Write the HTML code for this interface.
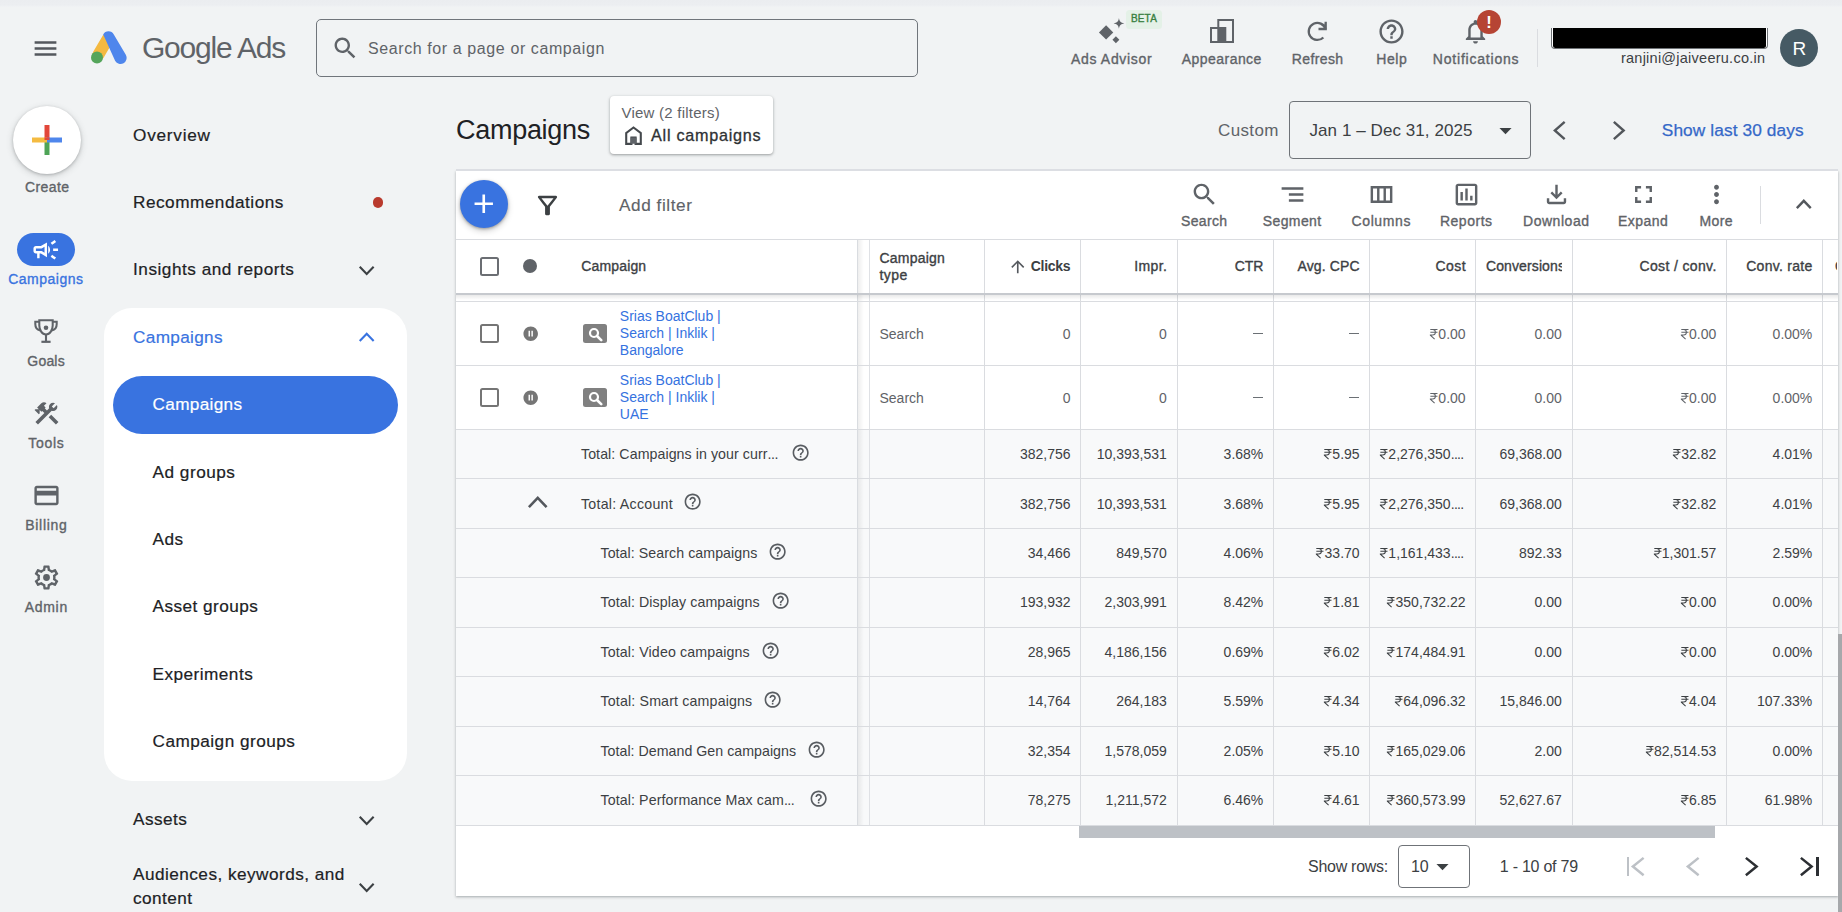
<!DOCTYPE html>
<html><head><meta charset="utf-8"><title>Campaigns - Google Ads</title><style>

html,body{margin:0;padding:0}
body{width:1842px;height:912px;overflow:hidden;background:#f1f3f4;position:relative;font-family:"Liberation Sans",sans-serif;}
.a{position:absolute}
.t{white-space:nowrap}
svg.rs{display:inline-block;height:0.716em;width:0.56em;margin-right:0.02em;vertical-align:baseline;overflow:visible}

</style></head><body>
<div class="a" style="left:0px;top:0px;width:1842px;height:6.5px;background:linear-gradient(#ebedf0,#eceef1 70%,#f1f3f4)"></div>
<svg class="a" style="left:31.20px;top:33.70px" width="29" height="29" viewBox="0 0 24 24"><path fill="#54585d" d="M3 18h18v-2H3v2zm0-5h18v-2H3v2zm0-7v2h18V6H3z"/></svg>
<svg class="a" style="left:90px;top:30px" width="38" height="35" viewBox="0 0 38 35"><path d="M13.4 4.4 L3.2 21.8 a6 6 0 0 0 10.4 6 L23.6 10.4z" fill="#f4b940"/><path d="M13.2 4.4 a6.1 6.1 0 0 1 10.6 0 L35.8 24.8 a6.1 6.1 0 0 1 -10.6 6.100z" fill="#4f86ec"/><circle cx="7" cy="27.600" r="6" fill="#55a55b"/></svg>
<div class="a t " style="top:30.000px;font-size:30px;line-height:36px;color:#5f6368;letter-spacing:-1.212px;left:142.00px;">Google Ads</div>
<div class="a" style="left:316px;top:19.2px;width:599.5px;height:55.5px;border:1px solid #70757b;border-radius:5px"></div>
<svg class="a" style="left:331.45px;top:33.95px" width="28.5" height="28.5" viewBox="0 0 24 24"><path fill="#5f6368" d="M15.5 14h-.79l-.28-.27C15.41 12.59 16 11.11 16 9.5 16 5.91 13.09 3 9.5 3S3 5.91 3 9.5 5.91 16 9.5 16c1.61 0 3.09-.59 4.23-1.57l.27.28v.79l5 4.99L20.49 19l-4.99-5zm-6 0C7.01 14 5 11.99 5 9.5S7.01 5 9.5 5 14 7.01 14 9.5 11.99 14 9.5 14z"/></svg>
<div class="a t " style="top:39.000px;font-size:16px;line-height:19px;color:#5f6368;letter-spacing:0.597px;left:368.00px;">Search for a page or campaign</div>
<svg class="a" style="left:1098px;top:18px" width="28" height="27" viewBox="0 0 28 27"><path fill="#5f6368" d="M8.100 7.300 L15.250 14.450 L8.100 21.600 L0.950 14.450z"/><path fill="#5f6368" d="M20.950 0.100 C21.500 3.600 22.700 4.850 26.250 5.400 C22.700 5.950 21.500 7.200 20.950 10.700 C20.400 7.200 19.200 5.950 15.650 5.400 C19.200 4.850 20.400 3.600 20.950 0.100z"/><path fill="#5f6368" d="M17.900 18.250 L21.350 21.700 L17.900 25.150 L14.450 21.700z"/></svg>
<div class="a" style="left:1126px;top:9.8px;width:36px;height:18.8px;background:#e4f1e7;border-radius:3.500px"></div>
<div class="a t " style="top:13.000px;font-size:10px;line-height:12px;color:#37803f;letter-spacing:0.156px;-webkit-text-stroke:0.35px #37803f;left:643.98px;width:1000px;text-align:center;">BETA</div>
<div class="a t " style="top:51.000px;font-size:14px;line-height:17px;color:#5f6368;letter-spacing:0.688px;-webkit-text-stroke:0.35px #5f6368;left:611.64px;width:1000px;text-align:center;">Ads Advisor</div>
<svg class="a" style="left:1209.500px;top:19px" width="24" height="24" viewBox="0 0 24 24"><path fill="#5f6368" fill-rule="evenodd" d="M7.300 0H24V24H0V8H7.300ZM9.300 2V8H16.300V22H22V2ZM2 10V22H7.300V10Z"/></svg>
<div class="a t " style="top:51.000px;font-size:14px;line-height:17px;color:#5f6368;letter-spacing:0.449px;-webkit-text-stroke:0.35px #5f6368;left:721.82px;width:1000px;text-align:center;">Appearance</div>
<svg class="a" style="left:1305px;top:19px" width="25" height="25" viewBox="0 0 25 25"><path d="M20.520 10.040 A8.550 8.550 0 1 0 18.350 18.450" fill="none" stroke="#5f6368" stroke-width="2.300"/><path d="M20.700 2.700 V10 H13.500" fill="none" stroke="#5f6368" stroke-width="2.300"/><path d="M20.700 10 L17.600 5.600 L19.400 4.400z" fill="#5f6368"/></svg>
<div class="a t " style="top:51.000px;font-size:14px;line-height:17px;color:#5f6368;letter-spacing:0.397px;-webkit-text-stroke:0.35px #5f6368;left:817.60px;width:1000px;text-align:center;">Refresh</div>
<svg class="a" style="left:1377.10px;top:16.90px" width="29" height="29" viewBox="0 0 24 24"><path fill="#5f6368" d="M11 18h2v-2h-2v2zm1-16C6.48 2 2 6.48 2 12s4.48 10 10 10 10-4.48 10-10S17.52 2 12 2zm0 18c-4.41 0-8-3.59-8-8s3.59-8 8-8 8 3.59 8 8-3.59 8-8 8zm0-14c-2.21 0-4 1.79-4 4h2c0-1.1.9-2 2-2s2 .9 2 2c0 2-3 1.75-3 5h2c0-2.25 3-2.5 3-5 0-2.21-1.79-4-4-4z"/></svg>
<div class="a t " style="top:51.000px;font-size:14px;line-height:17px;color:#5f6368;letter-spacing:0.551px;-webkit-text-stroke:0.35px #5f6368;left:891.78px;width:1000px;text-align:center;">Help</div>
<svg class="a" style="left:1461.30px;top:17.10px" width="29" height="29" viewBox="0 0 24 24"><path fill="#5f6368" d="M12 22c1.1 0 2-.9 2-2h-4c0 1.1.9 2 2 2zm6-6v-5c0-3.07-1.63-5.64-4.5-6.32V4c0-.83-.67-1.5-1.5-1.5s-1.5.67-1.5 1.5v.68C7.64 5.36 6 7.92 6 11v5l-2 2v1h16v-1l-2-2zm-2 1H8v-6c0-2.48 1.51-4.5 4-4.5s4 2.02 4 4.5v6z"/></svg>
<div class="a" style="left:1477px;top:9.7px;width:24px;height:24px;background:#b64434;border-radius:50%"></div>
<div class="a t " style="top:12.000px;font-size:16.5px;line-height:20px;color:#fff;font-weight:700;left:989.00px;width:1000px;text-align:center;">!</div>
<div class="a t " style="top:51.000px;font-size:14px;line-height:17px;color:#5f6368;letter-spacing:0.788px;-webkit-text-stroke:0.35px #5f6368;left:976.09px;width:1000px;text-align:center;">Notifications</div>
<div class="a" style="left:1536.5px;top:29px;width:1px;height:38px;background:#dadce0"></div>
<div class="a" style="left:1551px;top:27.800px;width:216.700px;height:21.700px;background:#fff;border:1px solid #6e7276;border-top:none;border-radius:0 0 4px 4px;box-sizing:border-box"><div class="a" style="left:0.800px;right:0.800px;top:0;bottom:0.800px;background:#000;border-radius:0 0 2.500px 2.500px"></div></div>
<div class="a t " style="top:50.000px;font-size:14.5px;line-height:17px;color:#3c4043;letter-spacing:0.248px;right:76.75px;">ranjini@jaiveeru.co.in</div>
<div class="a" style="left:1779.8px;top:28.8px;width:38.6px;height:38.6px;background:#465a64;border-radius:50%"></div>
<div class="a t " style="top:37.000px;font-size:19px;line-height:23px;color:#fff;left:1299.30px;width:1000px;text-align:center;">R</div>
<div class="a" style="left:13.2px;top:105.5px;width:68px;height:68px;background:#fff;border-radius:50%;box-shadow:0 1px 3px rgba(60,64,67,.3),0 2px 6px 1px rgba(60,64,67,.15)"></div>
<svg class="a" style="left:32.200px;top:124.500px" width="30" height="30" viewBox="0 0 30 30"><path fill="#e2473a" d="M12.500 0h5v15h-5z"/><path fill="#4ea457" d="M12.500 15h5v15h-5z"/><path fill="#f4bb41" d="M0 12.500h15v5H0z"/><path fill="#4f86ec" d="M15 12.500h15v5H15z"/><path fill="#e2473a" d="M12.500 12.500h5v2.500h-5z"/></svg>
<div class="a t " style="top:179.000px;font-size:14px;line-height:17px;color:#5f6368;letter-spacing:0.413px;-webkit-text-stroke:0.35px #5f6368;left:-452.79px;width:1000px;text-align:center;">Create</div>
<div class="a" style="left:17px;top:232.5px;width:58px;height:33.5px;background:#3973e0;border-radius:17px"></div>
<svg class="a" style="left:31.25px;top:234.55px" width="29.5" height="29.5" viewBox="0 0 24 24"><path fill="#fff" d="M18 11v2h4v-2h-4zm-2 6.61c.96.71 2.21 1.65 3.2 2.39.4-.53.8-1.07 1.2-1.6-.99-.74-2.24-1.68-3.2-2.4-.4.54-.8 1.08-1.2 1.61zM20.4 5.6c-.4-.53-.8-1.07-1.2-1.6-.99.74-2.24 1.68-3.2 2.4.4.53.8 1.07 1.2 1.6.96-.72 2.21-1.65 3.2-2.4zM4 9c-1.1 0-2 .9-2 2v2c0 1.1.9 2 2 2h1v4h2v-4h1l5 3V6L8 9H4zm5.03 1.71L11 9.53v4.94l-1.97-1.18-.48-.29H4v-2h4.55l.48-.29zM15.5 12c0-1.33-.58-2.53-1.5-3.35v6.69c.92-.81 1.5-2.01 1.5-3.34z"/></svg>
<div class="a t " style="top:271.000px;font-size:14px;line-height:17px;color:#3973e0;letter-spacing:0.520px;-webkit-text-stroke:0.35px #3973e0;left:-454.14px;width:1000px;text-align:center;">Campaigns</div>
<svg class="a" style="left:34px;top:319px" width="24" height="25" viewBox="0 0 24 25"><g fill="none" stroke="#5f6368" stroke-width="2.050"><path d="M5.300 1.300H18.700V6.500C18.700 11 16 15.400 12 15.400C8 15.400 5.300 11 5.300 6.500Z"/><path d="M5.300 2.700H1.300V5C1.300 8.500 3.400 10.900 6.200 11.400M18.700 2.700H22.700V5C22.700 8.500 20.600 10.900 17.800 11.400"/><path d="M12 15.300V22.500" stroke-width="2.100"/><path d="M7.400 22.800H16.600" stroke-width="2.200"/></g><circle cx="12" cy="8.800" r="2.300" fill="#5f6368"/></svg>
<div class="a t " style="top:353.000px;font-size:14px;line-height:17px;color:#5f6368;letter-spacing:0.205px;-webkit-text-stroke:0.35px #5f6368;left:-453.90px;width:1000px;text-align:center;">Goals</div>
<svg class="a" style="left:31.50px;top:399.00px" width="29" height="29" viewBox="0 0 24 24"><path fill="#5f6368" d="M13.783 15.172l2.121-2.121 5.996 5.996-2.121 2.121zM17.5 10c1.93 0 3.5-1.57 3.5-3.5 0-.58-.16-1.12-.41-1.6l-2.7 2.7-1.49-1.49 2.7-2.7c-.48-.25-1.020-.41-1.6-.41C15.57 3 14 4.57 14 6.5c0 .41.08.8.21 1.16l-1.85 1.85-1.78-1.78.71-.71-1.41-1.41L12 3.49c-1.17-1.17-3.07-1.17-4.240 0L4.220 7.030l1.410 1.410H2.810l-.71.71 3.540 3.540.71-.71V9.150l1.410 1.410.71-.71 1.780 1.780-7.410 7.410 2.120 2.120L16.340 9.790c.36.13.75.21 1.160.21z"/></svg>
<div class="a t " style="top:435.000px;font-size:14px;line-height:17px;color:#5f6368;letter-spacing:0.663px;-webkit-text-stroke:0.35px #5f6368;left:-453.67px;width:1000px;text-align:center;">Tools</div>
<svg class="a" style="left:31.50px;top:480.50px" width="29" height="29" viewBox="0 0 24 24"><path fill="#5f6368" d="M20 4H4c-1.11 0-1.99.89-1.99 2L2 18c0 1.11.89 2 2 2h16c1.11 0 2-.89 2-2V6c0-1.11-.89-2-2-2zm0 14H4v-6h16v6zm0-10H4V6h16v2z"/></svg>
<div class="a t " style="top:517.000px;font-size:14px;line-height:17px;color:#5f6368;letter-spacing:0.664px;-webkit-text-stroke:0.35px #5f6368;left:-453.67px;width:1000px;text-align:center;">Billing</div>
<svg class="a" style="left:31.50px;top:562.50px" width="29" height="29" viewBox="0 0 24 24"><path fill="#5f6368" d="M19.43 12.98c.04-.32.07-.64.07-.98 0-.34-.03-.66-.07-.98l2.11-1.65c.19-.15.24-.42.12-.64l-2-3.46c-.09-.16-.26-.25-.44-.25-.06 0-.12.01-.17.03l-2.49 1c-.52-.4-1.08-.73-1.69-.98l-.38-2.65C14.46 2.18 14.25 2 14 2h-4c-.25 0-.46.18-.49.42l-.38 2.65c-.61.25-1.17.59-1.69.98l-2.49-1c-.06-.02-.12-.03-.18-.03-.17 0-.34.09-.43.25l-2 3.46c-.13.22-.07.49.12.64l2.11 1.65c-.04.32-.07.65-.07.98 0 .33.03.66.07.98l-2.11 1.65c-.19.15-.24.42-.12.64l2 3.46c.09.16.26.25.44.25.06 0 .12-.01.17-.03l2.49-1c.52.4 1.08.73 1.69.98l.38 2.65c.03.24.24.42.49.42h4c.25 0 .46-.18.49-.42l.38-2.65c.61-.25 1.17-.59 1.69-.98l2.49 1c.06.02.12.03.18.03.17 0 .34-.09.43-.25l2-3.46c.12-.22.07-.49-.12-.64l-2.11-1.65zm-1.98-1.71c.04.31.05.52.05.73 0 .21-.02.43-.05.73l-.14 1.13.89.7 1.08.84-.7 1.21-1.27-.51-1.04-.42-.9.68c-.43.32-.84.56-1.25.73l-1.06.43-.16 1.13-.2 1.35h-1.4l-.19-1.35-.16-1.13-1.06-.43c-.43-.18-.83-.41-1.23-.71l-.91-.7-1.06.43-1.27.51-.7-1.21 1.08-.84.89-.7-.14-1.13c-.03-.31-.05-.54-.05-.74s.02-.43.05-.73l.14-1.13-.89-.7-1.08-.84.7-1.21 1.27.51 1.04.42.9-.68c.43-.32.84-.56 1.25-.73l1.06-.43.16-1.13.2-1.35h1.39l.19 1.35.16 1.13 1.06.43c.43.18.83.41 1.23.71l.91.7 1.06-.43 1.27-.51.7 1.21-1.07.85-.89.7.14 1.13z"/><circle cx="12" cy="12" r="2.800" fill="#5f6368"/></svg>
<div class="a t " style="top:599.000px;font-size:14px;line-height:17px;color:#5f6368;letter-spacing:0.663px;-webkit-text-stroke:0.35px #5f6368;left:-453.67px;width:1000px;text-align:center;">Admin</div>
<div class="a t " style="top:125.000px;font-size:17.2px;line-height:21px;color:#202124;letter-spacing:0.765px;-webkit-text-stroke:0.2px #202124;left:133.00px;">Overview</div>
<div class="a t " style="top:192.000px;font-size:17.2px;line-height:21px;color:#202124;letter-spacing:0.506px;-webkit-text-stroke:0.2px #202124;left:133.00px;">Recommendations</div>
<div class="a" style="left:372.9px;top:197.3px;width:10.3px;height:10.3px;background:#b93a2d;border-radius:50%"></div>
<div class="a t " style="top:259.000px;font-size:17.2px;line-height:21px;color:#202124;letter-spacing:0.522px;-webkit-text-stroke:0.2px #202124;left:133.00px;">Insights and reports</div>
<svg class="a" style="left:358.80px;top:265.85px;overflow:visible" width="15.4" height="8.7" viewBox="0 0 15.4 8.7"><path d="M0.735 0.735L7.7 7.964999999999999L14.665000000000001 0.735" fill="none" stroke="#3c4043" stroke-width="2.1"/></svg>
<div class="a" style="left:104px;top:308.3px;width:303px;height:473px;background:#fff;border-radius:28px"></div>
<div class="a t " style="top:327.000px;font-size:17.2px;line-height:21px;color:#3973e0;letter-spacing:0.333px;-webkit-text-stroke:0.2px #3973e0;left:133.00px;">Campaigns</div>
<svg class="a" style="left:358.80px;top:332.95px;overflow:visible" width="15.4" height="8.7" viewBox="0 0 15.4 8.7"><path d="M0.735 7.964999999999999L7.7 0.735L14.665000000000001 7.964999999999999" fill="none" stroke="#3973e0" stroke-width="2.1"/></svg>
<div class="a" style="left:113.3px;top:375.7px;width:284.7px;height:58px;background:#3973e0;border-radius:29px"></div>
<div class="a t " style="top:394.000px;font-size:17.2px;line-height:21px;color:#fff;letter-spacing:0.333px;-webkit-text-stroke:0.2px #fff;left:152.50px;">Campaigns</div>
<div class="a t " style="top:462.000px;font-size:17.2px;line-height:21px;color:#202124;letter-spacing:0.510px;-webkit-text-stroke:0.2px #202124;left:152.50px;">Ad groups</div>
<div class="a t " style="top:529.000px;font-size:17.2px;line-height:21px;color:#202124;letter-spacing:0.492px;-webkit-text-stroke:0.2px #202124;left:152.50px;">Ads</div>
<div class="a t " style="top:596.000px;font-size:17.2px;line-height:21px;color:#202124;letter-spacing:0.466px;-webkit-text-stroke:0.2px #202124;left:152.50px;">Asset groups</div>
<div class="a t " style="top:664.000px;font-size:17.2px;line-height:21px;color:#202124;letter-spacing:0.472px;-webkit-text-stroke:0.2px #202124;left:152.50px;">Experiments</div>
<div class="a t " style="top:731.000px;font-size:17.2px;line-height:21px;color:#202124;letter-spacing:0.478px;-webkit-text-stroke:0.2px #202124;left:152.50px;">Campaign groups</div>
<div class="a t " style="top:809.000px;font-size:17.2px;line-height:21px;color:#202124;letter-spacing:0.470px;-webkit-text-stroke:0.2px #202124;left:133.00px;">Assets</div>
<svg class="a" style="left:358.80px;top:815.85px;overflow:visible" width="15.4" height="8.7" viewBox="0 0 15.4 8.7"><path d="M0.735 0.735L7.7 7.964999999999999L14.665000000000001 0.735" fill="none" stroke="#3c4043" stroke-width="2.1"/></svg>
<div class="a t " style="top:864.000px;font-size:17.2px;line-height:21px;color:#202124;letter-spacing:0.466px;-webkit-text-stroke:0.2px #202124;left:133.00px;">Audiences, keywords, and</div>
<div class="a t " style="top:888.000px;font-size:17.2px;line-height:21px;color:#202124;letter-spacing:0.461px;-webkit-text-stroke:0.2px #202124;left:133.00px;">content</div>
<svg class="a" style="left:358.80px;top:882.85px;overflow:visible" width="15.4" height="8.7" viewBox="0 0 15.4 8.7"><path d="M0.735 0.735L7.7 7.964999999999999L14.665000000000001 0.735" fill="none" stroke="#3c4043" stroke-width="2.1"/></svg>
<div class="a t " style="top:114.000px;font-size:27px;line-height:32px;color:#202124;letter-spacing:-0.286px;left:456.00px;">Campaigns</div>
<div class="a" style="left:609.6px;top:96.4px;width:163.6px;height:57.5px;background:#fff;border-radius:4px;box-shadow:0 1px 2px rgba(60,64,67,.3),0 1px 3px 1px rgba(60,64,67,.15)"></div>
<div class="a t " style="top:104.000px;font-size:15px;line-height:18px;color:#5f6368;letter-spacing:0.234px;left:621.50px;">View (2 filters)</div>
<svg class="a" style="left:621.00px;top:122.80px" width="25" height="25" viewBox="0 0 24 24"><path fill="#45494d" d="M6 19h3v-6h6v6h3v-9l-6-4.5L6 10v9zm-2 2V9l8-6 8 6v12h-7v-6h-2v6H4z"/><path d="M9.200 14h5.600v6h-5.600z" fill="#5f6368"/></svg>
<div class="a t " style="top:126.000px;font-size:16.2px;line-height:19px;color:#2e3134;letter-spacing:0.742px;-webkit-text-stroke:0.3px #2e3134;left:651.00px;">All campaigns</div>
<div class="a t " style="top:121.000px;font-size:17px;line-height:20px;color:#5f6368;letter-spacing:0.371px;left:1218.00px;">Custom</div>
<div class="a" style="left:1289px;top:101px;width:240px;height:56px;border:1px solid #6f7378;border-radius:4px"></div>
<div class="a t " style="top:121.000px;font-size:17px;line-height:20px;color:#3c4043;letter-spacing:0.069px;left:1309.50px;">Jan 1 – Dec 31, 2025</div>
<svg class="a" style="left:1491.00px;top:116.00px" width="29" height="29" viewBox="0 0 24 24"><path fill="#3c4043" d="M7 10l5 5 5-5z"/></svg>
<svg class="a" style="left:1554.45px;top:120.90px;overflow:visible" width="11.5" height="19" viewBox="0 0 11.5 19"><path d="M10.66 0.84L0.84 9.5L10.66 18.16" fill="none" stroke="#52565b" stroke-width="2.4"/></svg>
<svg class="a" style="left:1612.65px;top:120.90px;overflow:visible" width="11.5" height="19" viewBox="0 0 11.5 19"><path d="M0.84 0.84L10.66 9.5L0.84 18.16" fill="none" stroke="#52565b" stroke-width="2.4"/></svg>
<div class="a t " style="top:120.000px;font-size:17.3px;line-height:21px;color:#3568c8;letter-spacing:0.094px;-webkit-text-stroke:0.25px #3568c8;left:1661.80px;">Show last 30 days</div>
<div class="a" style="left:455.6px;top:170.8px;width:1382.0px;height:725px;background:#fff;box-shadow:0 1px 2px rgba(60,64,67,.32),0 1px 3px 1px rgba(60,64,67,.07)"></div>
<div class="a" style="left:455.6px;top:168.8px;width:1382.0px;height:2.1px;background:#dcdee3"></div>
<div class="a" style="left:460px;top:180px;width:48px;height:48px;background:#3973e0;border-radius:50%;box-shadow:0 1px 3px rgba(0,0,0,.3),0 3px 6px rgba(0,0,0,.18)"></div>
<svg class="a" style="left:468.25px;top:187.65px" width="31.5" height="31.5" viewBox="0 0 24 24"><path fill="#fff" d="M19 13h-6v6h-2v-6H5v-2h6V5h2v6h6v2z"/></svg>
<svg class="a" style="left:532.50px;top:190.70px" width="29" height="29" viewBox="0 0 24 24"><path fill="#3c4043" d="M7 6h10l-5.01 6.3L7 6zm-2.75-.39C6.27 8.2 10 13 10 13v6c0 .55.45 1 1 1h2c.55 0 1-.45 1-1v-6s3.72-4.8 5.74-7.39c.51-.66.04-1.61-.79-1.61H5.04c-.83 0-1.3.95-.79 1.61z"/></svg>
<div class="a t " style="top:195.000px;font-size:17.2px;line-height:21px;color:#5f6368;letter-spacing:0.562px;-webkit-text-stroke:0.15px #5f6368;left:619.00px;">Add filter</div>
<svg class="a" style="left:1189.50px;top:179.80px" width="29" height="29" viewBox="0 0 24 24"><path fill="#5f6368" d="M15.5 14h-.79l-.28-.27C15.41 12.59 16 11.11 16 9.5 16 5.91 13.09 3 9.5 3S3 5.91 3 9.5 5.91 16 9.5 16c1.61 0 3.09-.59 4.23-1.57l.27.28v.79l5 4.99L20.49 19l-4.99-5zm-6 0C7.01 14 5 11.99 5 9.5S7.01 5 9.5 5 14 7.01 14 9.5 11.99 14 9.5 14z"/></svg><div class="a t " style="top:213.000px;font-size:14px;line-height:17px;color:#5f6368;letter-spacing:0.351px;-webkit-text-stroke:0.35px #5f6368;left:704.18px;width:1000px;text-align:center;">Search</div>
<svg class="a" style="left:1277.50px;top:179.80px" width="29" height="29" viewBox="0 0 24 24"><path fill="#5f6368" d="M9 18h12v-2H9v2zM3 6v2h18V6H3zm6 7h12v-2H9v2z"/></svg><div class="a t " style="top:213.000px;font-size:14px;line-height:17px;color:#5f6368;letter-spacing:0.399px;-webkit-text-stroke:0.35px #5f6368;left:792.20px;width:1000px;text-align:center;">Segment</div>
<svg class="a" style="left:1366.50px;top:179.80px" width="29" height="29" viewBox="0 0 24 24"><path fill="#5f6368" d="M3 5v14h18V5H3zm5.33 12H5V7h3.33v10zm5.34 0h-3.33V7h3.33v10zM19 17h-3.33V7H19v10z"/></svg><div class="a t " style="top:213.000px;font-size:14px;line-height:17px;color:#5f6368;letter-spacing:0.621px;-webkit-text-stroke:0.35px #5f6368;left:881.31px;width:1000px;text-align:center;">Columns</div>
<svg class="a" style="left:1451.50px;top:179.80px" width="29" height="29" viewBox="0 0 24 24"><path fill="#5f6368" d="M9 17H7v-7h2v7zm4 0h-2V7h2v10zm4 0h-2v-4h2v4zm2 2H5V5h14v14zm0-16H5c-1.1 0-2 .9-2 2v14c0 1.1.9 2 2 2h14c1.1 0 2-.9 2-2V5c0-1.1-.9-2-2-2z"/></svg><div class="a t " style="top:213.000px;font-size:14px;line-height:17px;color:#5f6368;letter-spacing:0.516px;-webkit-text-stroke:0.35px #5f6368;left:966.26px;width:1000px;text-align:center;">Reports</div>
<svg class="a" style="left:1541.50px;top:179.80px" width="29" height="29" viewBox="0 0 24 24"><path fill="#5f6368" d="M12 16l-5-5 1.4-1.45 2.6 2.6V4h2v8.15l2.6-2.6L17 11zm-6 4q-.825 0-1.412-.587T4 18v-3h2v3h12v-3h2v3q0 .825-.587 1.413T18 20z"/></svg><div class="a t " style="top:213.000px;font-size:14px;line-height:17px;color:#5f6368;letter-spacing:0.536px;-webkit-text-stroke:0.35px #5f6368;left:1056.27px;width:1000px;text-align:center;">Download</div>
<svg class="a" style="left:1628.50px;top:179.80px" width="29" height="29" viewBox="0 0 24 24"><path fill="#5f6368" d="M7 14H5v5h5v-2H7v-3zm-2-4h2V7h3V5H5v5zm12 7h-3v2h5v-5h-2v3zM14 5v2h3v3h2V5h-5z"/></svg><div class="a t " style="top:213.000px;font-size:14px;line-height:17px;color:#5f6368;letter-spacing:0.472px;-webkit-text-stroke:0.35px #5f6368;left:1143.24px;width:1000px;text-align:center;">Expand</div>
<svg class="a" style="left:1701.50px;top:179.80px" width="29" height="29" viewBox="0 0 24 24"><path fill="#5f6368" d="M12 8c1.1 0 2-.9 2-2s-.9-2-2-2-2 .9-2 2 .9 2 2 2zm0 2c-1.1 0-2 .9-2 2s.9 2 2 2 2-.9 2-2-.9-2-2-2zm0 6c-1.1 0-2 .9-2 2s.9 2 2 2 2-.9 2-2-.9-2-2-2z"/></svg><div class="a t " style="top:213.000px;font-size:14px;line-height:17px;color:#5f6368;letter-spacing:0.346px;-webkit-text-stroke:0.35px #5f6368;left:1216.17px;width:1000px;text-align:center;">More</div>
<div class="a" style="left:1759.5px;top:186px;width:1px;height:38px;background:#dadce0"></div>
<svg class="a" style="left:1796.00px;top:200.00px;overflow:visible" width="15.6" height="9" viewBox="0 0 15.6 9"><path d="M0.84 8.16L7.8 0.84L14.76 8.16" fill="none" stroke="#54585d" stroke-width="2.4"/></svg>
<div class="a" style="left:455.6px;top:238.9px;width:1382.0px;height:1.1px;background:#dadce0"></div>
<div class="a" style="left:455.6px;top:429.5px;width:1382.0px;height:395.79999999999995px;background:#f8f9fa"></div>
<div class="a" style="left:983.8px;top:240px;width:1px;height:585.3px;background:#dadce0"></div>
<div class="a" style="left:1080.3px;top:240px;width:1px;height:585.3px;background:#dadce0"></div>
<div class="a" style="left:1176.8px;top:240px;width:1px;height:585.3px;background:#dadce0"></div>
<div class="a" style="left:1272.8px;top:240px;width:1px;height:585.3px;background:#dadce0"></div>
<div class="a" style="left:1369.3px;top:240px;width:1px;height:585.3px;background:#dadce0"></div>
<div class="a" style="left:1475.0px;top:240px;width:1px;height:585.3px;background:#dadce0"></div>
<div class="a" style="left:1571.8px;top:240px;width:1px;height:585.3px;background:#dadce0"></div>
<div class="a" style="left:1725.8px;top:240px;width:1px;height:585.3px;background:#dadce0"></div>
<div class="a" style="left:1821.8px;top:240px;width:1px;height:585.3px;background:#dadce0"></div>
<div class="a" style="left:856.5px;top:240px;width:1.5px;height:585.3px;background:#d9dce0"></div>
<div class="a" style="left:858px;top:240px;width:5.5px;height:585.3px;background:linear-gradient(90deg,rgba(0,0,0,.065),rgba(0,0,0,0))"></div>
<div class="a" style="left:868.6px;top:240px;width:1.2px;height:585.3px;background:#dfe1e5"></div>
<div class="a" style="left:455.6px;top:293.1px;width:1382.0px;height:2.1px;background:#c6c9ce"></div>
<div class="a" style="left:455.6px;top:295.2px;width:1382.0px;height:5px;background:linear-gradient(rgba(0,0,0,.085),rgba(0,0,0,0))"></div>
<div class="a" style="left:455.6px;top:301.0px;width:1382.0px;height:1px;background:#dadce0"></div>
<div class="a" style="left:455.6px;top:364.8px;width:1382.0px;height:1px;background:#dadce0"></div>
<div class="a" style="left:455.6px;top:429.0px;width:1382.0px;height:1px;background:#dadce0"></div>
<div class="a" style="left:455.6px;top:478.45px;width:1382.0px;height:1px;background:#dadce0"></div>
<div class="a" style="left:455.6px;top:527.9px;width:1382.0px;height:1px;background:#dadce0"></div>
<div class="a" style="left:455.6px;top:577.35px;width:1382.0px;height:1px;background:#dadce0"></div>
<div class="a" style="left:455.6px;top:626.8px;width:1382.0px;height:1px;background:#dadce0"></div>
<div class="a" style="left:455.6px;top:676.25px;width:1382.0px;height:1px;background:#dadce0"></div>
<div class="a" style="left:455.6px;top:725.7px;width:1382.0px;height:1px;background:#dadce0"></div>
<div class="a" style="left:455.6px;top:775.1500000000001px;width:1382.0px;height:1px;background:#dadce0"></div>
<div class="a" style="left:455.6px;top:824.6px;width:1382.0px;height:1px;background:#dadce0"></div>
<div class="a" style="left:479.7px;top:256.7px;width:19.2px;height:19.2px;border:2px solid #6b6e73;border-radius:2.500px;box-sizing:border-box"></div>
<div class="a" style="left:522.9px;top:258.9px;width:14.5px;height:14.5px;background:#5f6368;border-radius:50%"></div>
<div class="a t " style="top:258.000px;font-size:14px;line-height:17px;color:#3c4043;letter-spacing:0.148px;-webkit-text-stroke:0.35px #3c4043;left:581.30px;">Campaign</div>
<div class="a t " style="top:250.000px;font-size:14px;line-height:17px;color:#3c4043;letter-spacing:0.211px;-webkit-text-stroke:0.35px #3c4043;left:879.50px;">Campaign</div>
<div class="a t " style="top:267.000px;font-size:14px;line-height:17px;color:#3c4043;letter-spacing:0.473px;-webkit-text-stroke:0.35px #3c4043;left:879.50px;">type</div>
<svg class="a" style="left:1007.85px;top:257.45px" width="19.5" height="19.5" viewBox="0 0 24 24"><path fill="#54585d" d="M4 12l1.41 1.41L11 7.83V20h2V7.83l5.58 5.59L20 12l-8-8-8 8z"/></svg>
<div class="a t " style="top:258.000px;font-size:14px;line-height:17px;color:#3c4043;font-weight:700;letter-spacing:-0.291px;right:771.69px;">Clicks</div>
<div class="a t " style="top:258.000px;font-size:14px;line-height:17px;color:#3c4043;letter-spacing:0.367px;-webkit-text-stroke:0.35px #3c4043;right:674.83px;">Impr.</div>
<div class="a t " style="top:258.000px;font-size:14px;line-height:17px;color:#3c4043;letter-spacing:-0.144px;-webkit-text-stroke:0.35px #3c4043;right:578.84px;">CTR</div>
<div class="a t " style="top:258.000px;font-size:14px;line-height:17px;color:#3c4043;letter-spacing:0.139px;-webkit-text-stroke:0.35px #3c4043;right:482.26px;">Avg. CPC</div>
<div class="a t " style="top:258.000px;font-size:14px;line-height:17px;color:#3c4043;letter-spacing:0.465px;-webkit-text-stroke:0.35px #3c4043;right:375.94px;">Cost</div>
<div class="a" style="left:1486px;top:250px;width:76.300px;height:30px;overflow:hidden"><div class="a t " style="top:8.000px;font-size:14px;line-height:17px;color:#3c4043;letter-spacing:0.108px;-webkit-text-stroke:0.35px #3c4043;left:0.00px;">Conversions</div></div>
<div class="a t " style="top:258.000px;font-size:14px;line-height:17px;color:#3c4043;letter-spacing:0.355px;-webkit-text-stroke:0.35px #3c4043;right:125.35px;">Cost / conv.</div>
<div class="a t " style="top:258.000px;font-size:14px;line-height:17px;color:#3c4043;letter-spacing:0.286px;-webkit-text-stroke:0.35px #3c4043;right:29.41px;">Conv. rate</div>
<div class="a" style="left:1835px;top:250px;width:2px;height:30px;overflow:hidden"><div class="a t " style="top:8.000px;font-size:14px;line-height:17px;color:#3c4043;-webkit-text-stroke:0.35px #3c4043;left:0.00px;">C</div></div>
<div class="a" style="left:479.7px;top:324.2px;width:19.2px;height:19.2px;border:2px solid #757575;border-radius:2.500px;box-sizing:border-box"></div>
<svg class="a" style="left:521.50px;top:325.10px" width="17.4" height="17.4" viewBox="0 0 24 24"><path fill="#757575" d="M12 2C6.48 2 2 6.48 2 12s4.48 10 10 10 10-4.48 10-10S17.52 2 12 2zm-1 14H9V8h2v8zm4 0h-2V8h2v8z"/></svg>
<div class="a" style="left:583px;top:324.3px;width:24px;height:19px;background:#808080;border-radius:2.500px"></div>
<svg class="a" style="left:587.60px;top:326.90px" width="15" height="15" viewBox="0 0 15 15"><circle cx="6" cy="6" r="4" fill="none" stroke="#fff" stroke-width="2.200"/><path d="M9 9l4.200 4.200" stroke="#fff" stroke-width="2.600" stroke-linecap="round"/></svg>
<div class="a t " style="top:308.000px;font-size:14px;line-height:17px;color:#3572e0;left:619.80px;">Srias BoatClub |</div>
<div class="a t " style="top:325.000px;font-size:14px;line-height:17px;color:#3572e0;left:619.80px;">Search | Inklik |</div>
<div class="a t " style="top:342.000px;font-size:14px;line-height:17px;color:#3572e0;left:619.80px;">Bangalore</div>
<div class="a t " style="top:326.000px;font-size:14px;line-height:17px;color:#5f6368;left:879.50px;">Search</div>
<div class="a t " style="top:326.000px;font-size:14px;line-height:17px;color:#5f6368;right:771.40px;">0</div>
<div class="a t " style="top:326.000px;font-size:14px;line-height:17px;color:#5f6368;right:675.20px;">0</div>
<div class="a" style="left:1252.8px;top:333.2px;width:10px;height:1.2px;background:#6b7075"></div>
<div class="a" style="left:1349.1px;top:333.2px;width:10px;height:1.2px;background:#6b7075"></div>
<div class="a t " style="top:326.000px;font-size:14px;line-height:17px;color:#5f6368;right:376.40px;"><svg class="rs" viewBox="0 0 560 716"><g fill="none" stroke="currentColor" stroke-width="74"><path d="M25 37H535M25 232H535"/><path d="M60 37H190C320 37 385 120 385 232S315 425 185 425H25V440L330 716" stroke-linejoin="miter"/></g></svg>0.00</div>
<div class="a t " style="top:326.000px;font-size:14px;line-height:17px;color:#5f6368;right:280.20px;">0.00</div>
<div class="a t " style="top:326.000px;font-size:14px;line-height:17px;color:#5f6368;right:125.70px;"><svg class="rs" viewBox="0 0 560 716"><g fill="none" stroke="currentColor" stroke-width="74"><path d="M25 37H535M25 232H535"/><path d="M60 37H190C320 37 385 120 385 232S315 425 185 425H25V440L330 716" stroke-linejoin="miter"/></g></svg>0.00</div>
<div class="a t " style="top:326.000px;font-size:14px;line-height:17px;color:#5f6368;right:29.70px;">0.00%</div>
<div class="a" style="left:479.7px;top:388.2px;width:19.2px;height:19.2px;border:2px solid #757575;border-radius:2.500px;box-sizing:border-box"></div>
<svg class="a" style="left:521.50px;top:389.10px" width="17.4" height="17.4" viewBox="0 0 24 24"><path fill="#757575" d="M12 2C6.48 2 2 6.48 2 12s4.48 10 10 10 10-4.48 10-10S17.52 2 12 2zm-1 14H9V8h2v8zm4 0h-2V8h2v8z"/></svg>
<div class="a" style="left:583px;top:388.3px;width:24px;height:19px;background:#808080;border-radius:2.500px"></div>
<svg class="a" style="left:587.60px;top:390.90px" width="15" height="15" viewBox="0 0 15 15"><circle cx="6" cy="6" r="4" fill="none" stroke="#fff" stroke-width="2.200"/><path d="M9 9l4.200 4.200" stroke="#fff" stroke-width="2.600" stroke-linecap="round"/></svg>
<div class="a t " style="top:372.000px;font-size:14px;line-height:17px;color:#3572e0;left:619.80px;">Srias BoatClub |</div>
<div class="a t " style="top:389.000px;font-size:14px;line-height:17px;color:#3572e0;left:619.80px;">Search | Inklik |</div>
<div class="a t " style="top:406.000px;font-size:14px;line-height:17px;color:#3572e0;left:619.80px;">UAE</div>
<div class="a t " style="top:390.000px;font-size:14px;line-height:17px;color:#5f6368;left:879.50px;">Search</div>
<div class="a t " style="top:390.000px;font-size:14px;line-height:17px;color:#5f6368;right:771.40px;">0</div>
<div class="a t " style="top:390.000px;font-size:14px;line-height:17px;color:#5f6368;right:675.20px;">0</div>
<div class="a" style="left:1252.8px;top:397.2px;width:10px;height:1.2px;background:#6b7075"></div>
<div class="a" style="left:1349.1px;top:397.2px;width:10px;height:1.2px;background:#6b7075"></div>
<div class="a t " style="top:390.000px;font-size:14px;line-height:17px;color:#5f6368;right:376.40px;"><svg class="rs" viewBox="0 0 560 716"><g fill="none" stroke="currentColor" stroke-width="74"><path d="M25 37H535M25 232H535"/><path d="M60 37H190C320 37 385 120 385 232S315 425 185 425H25V440L330 716" stroke-linejoin="miter"/></g></svg>0.00</div>
<div class="a t " style="top:390.000px;font-size:14px;line-height:17px;color:#5f6368;right:280.20px;">0.00</div>
<div class="a t " style="top:390.000px;font-size:14px;line-height:17px;color:#5f6368;right:125.70px;"><svg class="rs" viewBox="0 0 560 716"><g fill="none" stroke="currentColor" stroke-width="74"><path d="M25 37H535M25 232H535"/><path d="M60 37H190C320 37 385 120 385 232S315 425 185 425H25V440L330 716" stroke-linejoin="miter"/></g></svg>0.00</div>
<div class="a t " style="top:390.000px;font-size:14px;line-height:17px;color:#5f6368;right:29.70px;">0.00%</div>
<div class="a t " style="top:446.000px;font-size:14.2px;line-height:17px;color:#3c4043;letter-spacing:0.071px;left:581.00px;">Total: Campaigns in your curr<span style="letter-spacing:-.5px">...</span></div>
<svg class="a" style="left:790.65px;top:442.85px" width="19.3" height="19.3" viewBox="0 0 24 24"><path fill="#585c61" d="M11 18h2v-2h-2v2zm1-16C6.48 2 2 6.48 2 12s4.48 10 10 10 10-4.48 10-10S17.52 2 12 2zm0 18c-4.41 0-8-3.59-8-8s3.59-8 8-8 8 3.59 8 8-3.59 8-8 8zm0-14c-2.21 0-4 1.79-4 4h2c0-1.1.9-2 2-2s2 .9 2 2c0 2-3 1.75-3 5h2c0-2.25 3-2.5 3-5 0-2.21-1.79-4-4-4z"/></svg>
<div class="a t " style="top:446.000px;font-size:14px;line-height:17px;color:#3c4043;right:771.40px;">382,756</div>
<div class="a t " style="top:446.000px;font-size:14px;line-height:17px;color:#3c4043;right:675.20px;">10,393,531</div>
<div class="a t " style="top:446.000px;font-size:14px;line-height:17px;color:#3c4043;right:578.70px;">3.68%</div>
<div class="a t " style="top:446.000px;font-size:14px;line-height:17px;color:#3c4043;right:482.40px;"><svg class="rs" viewBox="0 0 560 716"><g fill="none" stroke="currentColor" stroke-width="74"><path d="M25 37H535M25 232H535"/><path d="M60 37H190C320 37 385 120 385 232S315 425 185 425H25V440L330 716" stroke-linejoin="miter"/></g></svg>5.95</div>
<div class="a t " style="top:446.000px;font-size:14px;line-height:17px;color:#3c4043;right:376.40px;"><svg class="rs" viewBox="0 0 560 716"><g fill="none" stroke="currentColor" stroke-width="74"><path d="M25 37H535M25 232H535"/><path d="M60 37H190C320 37 385 120 385 232S315 425 185 425H25V440L330 716" stroke-linejoin="miter"/></g></svg>2,276,350<span style="letter-spacing:-.65px;margin-right:2px">....</span></div>
<div class="a t " style="top:446.000px;font-size:14px;line-height:17px;color:#3c4043;right:280.20px;">69,368.00</div>
<div class="a t " style="top:446.000px;font-size:14px;line-height:17px;color:#3c4043;right:125.70px;"><svg class="rs" viewBox="0 0 560 716"><g fill="none" stroke="currentColor" stroke-width="74"><path d="M25 37H535M25 232H535"/><path d="M60 37H190C320 37 385 120 385 232S315 425 185 425H25V440L330 716" stroke-linejoin="miter"/></g></svg>32.82</div>
<div class="a t " style="top:446.000px;font-size:14px;line-height:17px;color:#3c4043;right:29.70px;">4.01%</div>
<div class="a t " style="top:496.000px;font-size:14.2px;line-height:17px;color:#3c4043;letter-spacing:0.256px;left:581.00px;">Total: Account</div>
<svg class="a" style="left:683.35px;top:492.30px" width="19.3" height="19.3" viewBox="0 0 24 24"><path fill="#585c61" d="M11 18h2v-2h-2v2zm1-16C6.48 2 2 6.48 2 12s4.48 10 10 10 10-4.48 10-10S17.52 2 12 2zm0 18c-4.41 0-8-3.59-8-8s3.59-8 8-8 8 3.59 8 8-3.59 8-8 8zm0-14c-2.21 0-4 1.79-4 4h2c0-1.1.9-2 2-2s2 .9 2 2c0 2-3 1.75-3 5h2c0-2.25 3-2.5 3-5 0-2.21-1.79-4-4-4z"/></svg>
<div class="a t " style="top:496.000px;font-size:14px;line-height:17px;color:#3c4043;right:771.40px;">382,756</div>
<div class="a t " style="top:496.000px;font-size:14px;line-height:17px;color:#3c4043;right:675.20px;">10,393,531</div>
<div class="a t " style="top:496.000px;font-size:14px;line-height:17px;color:#3c4043;right:578.70px;">3.68%</div>
<div class="a t " style="top:496.000px;font-size:14px;line-height:17px;color:#3c4043;right:482.40px;"><svg class="rs" viewBox="0 0 560 716"><g fill="none" stroke="currentColor" stroke-width="74"><path d="M25 37H535M25 232H535"/><path d="M60 37H190C320 37 385 120 385 232S315 425 185 425H25V440L330 716" stroke-linejoin="miter"/></g></svg>5.95</div>
<div class="a t " style="top:496.000px;font-size:14px;line-height:17px;color:#3c4043;right:376.40px;"><svg class="rs" viewBox="0 0 560 716"><g fill="none" stroke="currentColor" stroke-width="74"><path d="M25 37H535M25 232H535"/><path d="M60 37H190C320 37 385 120 385 232S315 425 185 425H25V440L330 716" stroke-linejoin="miter"/></g></svg>2,276,350<span style="letter-spacing:-.65px;margin-right:2px">....</span></div>
<div class="a t " style="top:496.000px;font-size:14px;line-height:17px;color:#3c4043;right:280.20px;">69,368.00</div>
<div class="a t " style="top:496.000px;font-size:14px;line-height:17px;color:#3c4043;right:125.70px;"><svg class="rs" viewBox="0 0 560 716"><g fill="none" stroke="currentColor" stroke-width="74"><path d="M25 37H535M25 232H535"/><path d="M60 37H190C320 37 385 120 385 232S315 425 185 425H25V440L330 716" stroke-linejoin="miter"/></g></svg>32.82</div>
<div class="a t " style="top:496.000px;font-size:14px;line-height:17px;color:#3c4043;right:29.70px;">4.01%</div>
<div class="a t " style="top:545.000px;font-size:14.2px;line-height:17px;color:#3c4043;letter-spacing:0.065px;left:600.50px;">Total: Search campaigns</div>
<svg class="a" style="left:768.35px;top:541.75px" width="19.3" height="19.3" viewBox="0 0 24 24"><path fill="#585c61" d="M11 18h2v-2h-2v2zm1-16C6.48 2 2 6.48 2 12s4.48 10 10 10 10-4.48 10-10S17.52 2 12 2zm0 18c-4.41 0-8-3.59-8-8s3.59-8 8-8 8 3.59 8 8-3.59 8-8 8zm0-14c-2.21 0-4 1.79-4 4h2c0-1.1.9-2 2-2s2 .9 2 2c0 2-3 1.75-3 5h2c0-2.25 3-2.5 3-5 0-2.21-1.79-4-4-4z"/></svg>
<div class="a t " style="top:545.000px;font-size:14px;line-height:17px;color:#3c4043;right:771.40px;">34,466</div>
<div class="a t " style="top:545.000px;font-size:14px;line-height:17px;color:#3c4043;right:675.20px;">849,570</div>
<div class="a t " style="top:545.000px;font-size:14px;line-height:17px;color:#3c4043;right:578.70px;">4.06%</div>
<div class="a t " style="top:545.000px;font-size:14px;line-height:17px;color:#3c4043;right:482.40px;"><svg class="rs" viewBox="0 0 560 716"><g fill="none" stroke="currentColor" stroke-width="74"><path d="M25 37H535M25 232H535"/><path d="M60 37H190C320 37 385 120 385 232S315 425 185 425H25V440L330 716" stroke-linejoin="miter"/></g></svg>33.70</div>
<div class="a t " style="top:545.000px;font-size:14px;line-height:17px;color:#3c4043;right:376.40px;"><svg class="rs" viewBox="0 0 560 716"><g fill="none" stroke="currentColor" stroke-width="74"><path d="M25 37H535M25 232H535"/><path d="M60 37H190C320 37 385 120 385 232S315 425 185 425H25V440L330 716" stroke-linejoin="miter"/></g></svg>1,161,433<span style="letter-spacing:-.65px;margin-right:2px">....</span></div>
<div class="a t " style="top:545.000px;font-size:14px;line-height:17px;color:#3c4043;right:280.20px;">892.33</div>
<div class="a t " style="top:545.000px;font-size:14px;line-height:17px;color:#3c4043;right:125.70px;"><svg class="rs" viewBox="0 0 560 716"><g fill="none" stroke="currentColor" stroke-width="74"><path d="M25 37H535M25 232H535"/><path d="M60 37H190C320 37 385 120 385 232S315 425 185 425H25V440L330 716" stroke-linejoin="miter"/></g></svg>1,301.57</div>
<div class="a t " style="top:545.000px;font-size:14px;line-height:17px;color:#3c4043;right:29.70px;">2.59%</div>
<div class="a t " style="top:594.000px;font-size:14.2px;line-height:17px;color:#3c4043;letter-spacing:0.093px;left:600.50px;">Total: Display campaigns</div>
<svg class="a" style="left:771.35px;top:591.20px" width="19.3" height="19.3" viewBox="0 0 24 24"><path fill="#585c61" d="M11 18h2v-2h-2v2zm1-16C6.48 2 2 6.48 2 12s4.48 10 10 10 10-4.48 10-10S17.52 2 12 2zm0 18c-4.41 0-8-3.59-8-8s3.59-8 8-8 8 3.59 8 8-3.59 8-8 8zm0-14c-2.21 0-4 1.79-4 4h2c0-1.1.9-2 2-2s2 .9 2 2c0 2-3 1.75-3 5h2c0-2.25 3-2.5 3-5 0-2.21-1.79-4-4-4z"/></svg>
<div class="a t " style="top:594.000px;font-size:14px;line-height:17px;color:#3c4043;right:771.40px;">193,932</div>
<div class="a t " style="top:594.000px;font-size:14px;line-height:17px;color:#3c4043;right:675.20px;">2,303,991</div>
<div class="a t " style="top:594.000px;font-size:14px;line-height:17px;color:#3c4043;right:578.70px;">8.42%</div>
<div class="a t " style="top:594.000px;font-size:14px;line-height:17px;color:#3c4043;right:482.40px;"><svg class="rs" viewBox="0 0 560 716"><g fill="none" stroke="currentColor" stroke-width="74"><path d="M25 37H535M25 232H535"/><path d="M60 37H190C320 37 385 120 385 232S315 425 185 425H25V440L330 716" stroke-linejoin="miter"/></g></svg>1.81</div>
<div class="a t " style="top:594.000px;font-size:14px;line-height:17px;color:#3c4043;right:376.40px;"><svg class="rs" viewBox="0 0 560 716"><g fill="none" stroke="currentColor" stroke-width="74"><path d="M25 37H535M25 232H535"/><path d="M60 37H190C320 37 385 120 385 232S315 425 185 425H25V440L330 716" stroke-linejoin="miter"/></g></svg>350,732.22</div>
<div class="a t " style="top:594.000px;font-size:14px;line-height:17px;color:#3c4043;right:280.20px;">0.00</div>
<div class="a t " style="top:594.000px;font-size:14px;line-height:17px;color:#3c4043;right:125.70px;"><svg class="rs" viewBox="0 0 560 716"><g fill="none" stroke="currentColor" stroke-width="74"><path d="M25 37H535M25 232H535"/><path d="M60 37H190C320 37 385 120 385 232S315 425 185 425H25V440L330 716" stroke-linejoin="miter"/></g></svg>0.00</div>
<div class="a t " style="top:594.000px;font-size:14px;line-height:17px;color:#3c4043;right:29.70px;">0.00%</div>
<div class="a t " style="top:644.000px;font-size:14.2px;line-height:17px;color:#3c4043;letter-spacing:0.129px;left:600.50px;">Total: Video campaigns</div>
<svg class="a" style="left:760.85px;top:640.65px" width="19.3" height="19.3" viewBox="0 0 24 24"><path fill="#585c61" d="M11 18h2v-2h-2v2zm1-16C6.48 2 2 6.48 2 12s4.48 10 10 10 10-4.48 10-10S17.52 2 12 2zm0 18c-4.41 0-8-3.59-8-8s3.59-8 8-8 8 3.59 8 8-3.59 8-8 8zm0-14c-2.21 0-4 1.79-4 4h2c0-1.1.9-2 2-2s2 .9 2 2c0 2-3 1.75-3 5h2c0-2.25 3-2.5 3-5 0-2.21-1.79-4-4-4z"/></svg>
<div class="a t " style="top:644.000px;font-size:14px;line-height:17px;color:#3c4043;right:771.40px;">28,965</div>
<div class="a t " style="top:644.000px;font-size:14px;line-height:17px;color:#3c4043;right:675.20px;">4,186,156</div>
<div class="a t " style="top:644.000px;font-size:14px;line-height:17px;color:#3c4043;right:578.70px;">0.69%</div>
<div class="a t " style="top:644.000px;font-size:14px;line-height:17px;color:#3c4043;right:482.40px;"><svg class="rs" viewBox="0 0 560 716"><g fill="none" stroke="currentColor" stroke-width="74"><path d="M25 37H535M25 232H535"/><path d="M60 37H190C320 37 385 120 385 232S315 425 185 425H25V440L330 716" stroke-linejoin="miter"/></g></svg>6.02</div>
<div class="a t " style="top:644.000px;font-size:14px;line-height:17px;color:#3c4043;right:376.40px;"><svg class="rs" viewBox="0 0 560 716"><g fill="none" stroke="currentColor" stroke-width="74"><path d="M25 37H535M25 232H535"/><path d="M60 37H190C320 37 385 120 385 232S315 425 185 425H25V440L330 716" stroke-linejoin="miter"/></g></svg>174,484.91</div>
<div class="a t " style="top:644.000px;font-size:14px;line-height:17px;color:#3c4043;right:280.20px;">0.00</div>
<div class="a t " style="top:644.000px;font-size:14px;line-height:17px;color:#3c4043;right:125.70px;"><svg class="rs" viewBox="0 0 560 716"><g fill="none" stroke="currentColor" stroke-width="74"><path d="M25 37H535M25 232H535"/><path d="M60 37H190C320 37 385 120 385 232S315 425 185 425H25V440L330 716" stroke-linejoin="miter"/></g></svg>0.00</div>
<div class="a t " style="top:644.000px;font-size:14px;line-height:17px;color:#3c4043;right:29.70px;">0.00%</div>
<div class="a t " style="top:693.000px;font-size:14.2px;line-height:17px;color:#3c4043;letter-spacing:0.165px;left:600.50px;">Total: Smart campaigns</div>
<svg class="a" style="left:762.85px;top:690.10px" width="19.3" height="19.3" viewBox="0 0 24 24"><path fill="#585c61" d="M11 18h2v-2h-2v2zm1-16C6.48 2 2 6.48 2 12s4.48 10 10 10 10-4.48 10-10S17.52 2 12 2zm0 18c-4.41 0-8-3.59-8-8s3.59-8 8-8 8 3.59 8 8-3.59 8-8 8zm0-14c-2.21 0-4 1.79-4 4h2c0-1.1.9-2 2-2s2 .9 2 2c0 2-3 1.75-3 5h2c0-2.25 3-2.5 3-5 0-2.21-1.79-4-4-4z"/></svg>
<div class="a t " style="top:693.000px;font-size:14px;line-height:17px;color:#3c4043;right:771.40px;">14,764</div>
<div class="a t " style="top:693.000px;font-size:14px;line-height:17px;color:#3c4043;right:675.20px;">264,183</div>
<div class="a t " style="top:693.000px;font-size:14px;line-height:17px;color:#3c4043;right:578.70px;">5.59%</div>
<div class="a t " style="top:693.000px;font-size:14px;line-height:17px;color:#3c4043;right:482.40px;"><svg class="rs" viewBox="0 0 560 716"><g fill="none" stroke="currentColor" stroke-width="74"><path d="M25 37H535M25 232H535"/><path d="M60 37H190C320 37 385 120 385 232S315 425 185 425H25V440L330 716" stroke-linejoin="miter"/></g></svg>4.34</div>
<div class="a t " style="top:693.000px;font-size:14px;line-height:17px;color:#3c4043;right:376.40px;"><svg class="rs" viewBox="0 0 560 716"><g fill="none" stroke="currentColor" stroke-width="74"><path d="M25 37H535M25 232H535"/><path d="M60 37H190C320 37 385 120 385 232S315 425 185 425H25V440L330 716" stroke-linejoin="miter"/></g></svg>64,096.32</div>
<div class="a t " style="top:693.000px;font-size:14px;line-height:17px;color:#3c4043;right:280.20px;">15,846.00</div>
<div class="a t " style="top:693.000px;font-size:14px;line-height:17px;color:#3c4043;right:125.70px;"><svg class="rs" viewBox="0 0 560 716"><g fill="none" stroke="currentColor" stroke-width="74"><path d="M25 37H535M25 232H535"/><path d="M60 37H190C320 37 385 120 385 232S315 425 185 425H25V440L330 716" stroke-linejoin="miter"/></g></svg>4.04</div>
<div class="a t " style="top:693.000px;font-size:14px;line-height:17px;color:#3c4043;right:29.70px;">107.33%</div>
<div class="a t " style="top:743.000px;font-size:14.2px;line-height:17px;color:#3c4043;letter-spacing:0.027px;left:600.50px;">Total: Demand Gen campaigns</div>
<svg class="a" style="left:806.85px;top:739.55px" width="19.3" height="19.3" viewBox="0 0 24 24"><path fill="#585c61" d="M11 18h2v-2h-2v2zm1-16C6.48 2 2 6.48 2 12s4.48 10 10 10 10-4.48 10-10S17.52 2 12 2zm0 18c-4.41 0-8-3.59-8-8s3.59-8 8-8 8 3.59 8 8-3.59 8-8 8zm0-14c-2.21 0-4 1.79-4 4h2c0-1.1.9-2 2-2s2 .9 2 2c0 2-3 1.75-3 5h2c0-2.25 3-2.5 3-5 0-2.21-1.79-4-4-4z"/></svg>
<div class="a t " style="top:743.000px;font-size:14px;line-height:17px;color:#3c4043;right:771.40px;">32,354</div>
<div class="a t " style="top:743.000px;font-size:14px;line-height:17px;color:#3c4043;right:675.20px;">1,578,059</div>
<div class="a t " style="top:743.000px;font-size:14px;line-height:17px;color:#3c4043;right:578.70px;">2.05%</div>
<div class="a t " style="top:743.000px;font-size:14px;line-height:17px;color:#3c4043;right:482.40px;"><svg class="rs" viewBox="0 0 560 716"><g fill="none" stroke="currentColor" stroke-width="74"><path d="M25 37H535M25 232H535"/><path d="M60 37H190C320 37 385 120 385 232S315 425 185 425H25V440L330 716" stroke-linejoin="miter"/></g></svg>5.10</div>
<div class="a t " style="top:743.000px;font-size:14px;line-height:17px;color:#3c4043;right:376.40px;"><svg class="rs" viewBox="0 0 560 716"><g fill="none" stroke="currentColor" stroke-width="74"><path d="M25 37H535M25 232H535"/><path d="M60 37H190C320 37 385 120 385 232S315 425 185 425H25V440L330 716" stroke-linejoin="miter"/></g></svg>165,029.06</div>
<div class="a t " style="top:743.000px;font-size:14px;line-height:17px;color:#3c4043;right:280.20px;">2.00</div>
<div class="a t " style="top:743.000px;font-size:14px;line-height:17px;color:#3c4043;right:125.70px;"><svg class="rs" viewBox="0 0 560 716"><g fill="none" stroke="currentColor" stroke-width="74"><path d="M25 37H535M25 232H535"/><path d="M60 37H190C320 37 385 120 385 232S315 425 185 425H25V440L330 716" stroke-linejoin="miter"/></g></svg>82,514.53</div>
<div class="a t " style="top:743.000px;font-size:14px;line-height:17px;color:#3c4043;right:29.70px;">0.00%</div>
<div class="a t " style="top:792.000px;font-size:14.2px;line-height:17px;color:#3c4043;letter-spacing:0.108px;left:600.50px;">Total: Performance Max cam<span style="letter-spacing:-.5px">...</span></div>
<svg class="a" style="left:809.35px;top:789.00px" width="19.3" height="19.3" viewBox="0 0 24 24"><path fill="#585c61" d="M11 18h2v-2h-2v2zm1-16C6.48 2 2 6.48 2 12s4.48 10 10 10 10-4.48 10-10S17.52 2 12 2zm0 18c-4.41 0-8-3.59-8-8s3.59-8 8-8 8 3.59 8 8-3.59 8-8 8zm0-14c-2.21 0-4 1.79-4 4h2c0-1.1.9-2 2-2s2 .9 2 2c0 2-3 1.75-3 5h2c0-2.25 3-2.5 3-5 0-2.21-1.79-4-4-4z"/></svg>
<div class="a t " style="top:792.000px;font-size:14px;line-height:17px;color:#3c4043;right:771.40px;">78,275</div>
<div class="a t " style="top:792.000px;font-size:14px;line-height:17px;color:#3c4043;right:675.20px;">1,211,572</div>
<div class="a t " style="top:792.000px;font-size:14px;line-height:17px;color:#3c4043;right:578.70px;">6.46%</div>
<div class="a t " style="top:792.000px;font-size:14px;line-height:17px;color:#3c4043;right:482.40px;"><svg class="rs" viewBox="0 0 560 716"><g fill="none" stroke="currentColor" stroke-width="74"><path d="M25 37H535M25 232H535"/><path d="M60 37H190C320 37 385 120 385 232S315 425 185 425H25V440L330 716" stroke-linejoin="miter"/></g></svg>4.61</div>
<div class="a t " style="top:792.000px;font-size:14px;line-height:17px;color:#3c4043;right:376.40px;"><svg class="rs" viewBox="0 0 560 716"><g fill="none" stroke="currentColor" stroke-width="74"><path d="M25 37H535M25 232H535"/><path d="M60 37H190C320 37 385 120 385 232S315 425 185 425H25V440L330 716" stroke-linejoin="miter"/></g></svg>360,573.99</div>
<div class="a t " style="top:792.000px;font-size:14px;line-height:17px;color:#3c4043;right:280.20px;">52,627.67</div>
<div class="a t " style="top:792.000px;font-size:14px;line-height:17px;color:#3c4043;right:125.70px;"><svg class="rs" viewBox="0 0 560 716"><g fill="none" stroke="currentColor" stroke-width="74"><path d="M25 37H535M25 232H535"/><path d="M60 37H190C320 37 385 120 385 232S315 425 185 425H25V440L330 716" stroke-linejoin="miter"/></g></svg>6.85</div>
<div class="a t " style="top:792.000px;font-size:14px;line-height:17px;color:#3c4043;right:29.70px;">61.98%</div>
<svg class="a" style="left:527.75px;top:496.50px;overflow:visible" width="19.5" height="11" viewBox="0 0 19.5 11"><path d="M0.9099999999999999 10.09L9.75 0.9099999999999999L18.59 10.09" fill="none" stroke="#54585d" stroke-width="2.6"/></svg>
<div class="a" style="left:1079px;top:826px;width:636px;height:11.5px;background:#bdc1c6"></div>
<div class="a t " style="top:857.000px;font-size:16px;line-height:19px;color:#3c4043;letter-spacing:-0.270px;left:1308.00px;">Show rows:</div>
<div class="a" style="left:1398px;top:845.2px;width:72px;height:42.8px;border:1px solid #6f7378;border-radius:4px;box-sizing:border-box"></div>
<div class="a t " style="top:857.000px;font-size:16px;line-height:19px;color:#3c4043;letter-spacing:-0.249px;left:1411.00px;">10</div>
<svg class="a" style="left:1428.30px;top:852.30px" width="29" height="29" viewBox="0 0 24 24"><path fill="#3c4043" d="M7 10l5 5 5-5z"/></svg>
<div class="a t " style="top:857.000px;font-size:16px;line-height:19px;color:#3c4043;letter-spacing:-0.246px;left:1499.80px;">1 - 10 of 79</div>
<div class="a" style="left:1626.8px;top:856.9px;width:2.3px;height:19.2px;background:#bdc1c6"></div>
<svg class="a" style="left:1631.95px;top:856.90px;overflow:visible" width="12.5" height="19.2" viewBox="0 0 12.5 19.2"><path d="M11.625 0.875L0.875 9.6L11.625 18.325" fill="none" stroke="#bdc1c6" stroke-width="2.5"/></svg>
<svg class="a" style="left:1686.55px;top:856.90px;overflow:visible" width="12.5" height="19.2" viewBox="0 0 12.5 19.2"><path d="M11.625 0.875L0.875 9.6L11.625 18.325" fill="none" stroke="#bdc1c6" stroke-width="2.5"/></svg>
<svg class="a" style="left:1745.25px;top:856.90px;overflow:visible" width="12.5" height="19.2" viewBox="0 0 12.5 19.2"><path d="M0.875 0.875L11.625 9.6L0.875 18.325" fill="none" stroke="#2c2f33" stroke-width="2.5"/></svg>
<svg class="a" style="left:1799.75px;top:856.90px;overflow:visible" width="12.5" height="19.2" viewBox="0 0 12.5 19.2"><path d="M0.875 0.875L11.625 9.6L0.875 18.325" fill="none" stroke="#2c2f33" stroke-width="2.5"/></svg>
<div class="a" style="left:1816.4px;top:856.9px;width:2.3px;height:19.2px;background:#2c2f33"></div>
<div class="a" style="left:1837.8px;top:634px;width:4.2px;height:278px;background:#a6a8ab"></div>
</body></html>
